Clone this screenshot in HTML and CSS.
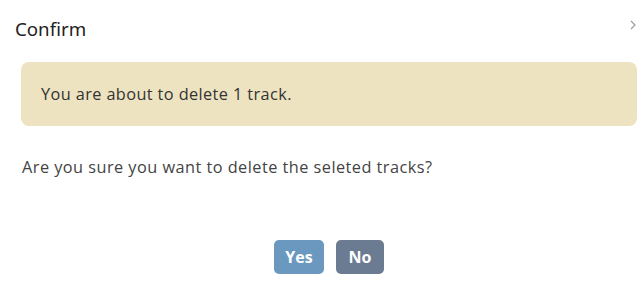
FILE: index.html
```html
<!DOCTYPE html>
<html lang="en">
<head>
  <meta charset="UTF-8" />
  <title>Confirm</title>
  <link rel="stylesheet" href="styles.css">
</head>
<body>
  <div class="dialog">
    <div class="dialog-header">
      <span class="dialog-title">Confirm</span>
      <svg class="close" width="6" height="10" viewBox="0 0 6 10"><path d="M1 1 L5 5 L1 9" fill="none" stroke="#999" stroke-width="1.1"/></svg>
    </div>
    <div class="dialog-body">
      <div class="alert">You are about to delete 1 track.</div>
      <p class="question">Are you sure you want to delete the seleted tracks?</p>
    </div>
    <div class="dialog-footer">
      <button class="btn btn-yes">Yes</button>
      <button class="btn btn-no">No</button>
    </div>
  </div>
</body>
</html>
```

FILE: styles.css
```css
body {
  margin: 0;
  background: #fff;
  font-family: "Open Sans", "Noto Sans", sans-serif;
  color: #333;
}

.dialog {
  width: 638px;
}

.dialog-header {
  display: flex;
  justify-content: space-between;
  align-items: center;
  padding: 16px 1px 0 15px;
  height: 24px;
}

.dialog-title {
  font-family: "Noto Sans", sans-serif;
  font-size: 18.7px;
  color: #222;
}

.close {
  margin-top: -6px;
  margin-right: 1px;
}

.dialog-body {
  padding: 22px 1px 0 21px;
}

.alert {
  background: #ede3c0;
  border-radius: 8px;
  height: 64px;
  display: flex;
  align-items: center;
  padding-left: 20px;
  font-size: 16.3px;
  letter-spacing: 0.4px;
  color: #333;
}

.question {
  margin: 30px 0 0 1px;
  font-size: 16.3px;
  letter-spacing: 0.47px;
  color: #444;
}

.dialog-footer {
  display: flex;
  justify-content: center;
  gap: 12px;
  padding-top: 62px;
  padding-left: 20px;
}

.btn {
  height: 34px;
  border: none;
  border-radius: 5px;
  color: #fff;
  font-family: "Open Sans", sans-serif;
  font-weight: bold;
  font-size: 16px;
  padding: 0;
  cursor: pointer;
}

.btn-yes {
  background: #6b98bf;
  width: 50px;
}

.btn-no {
  background: #6b7b91;
  width: 48px;
}
```
